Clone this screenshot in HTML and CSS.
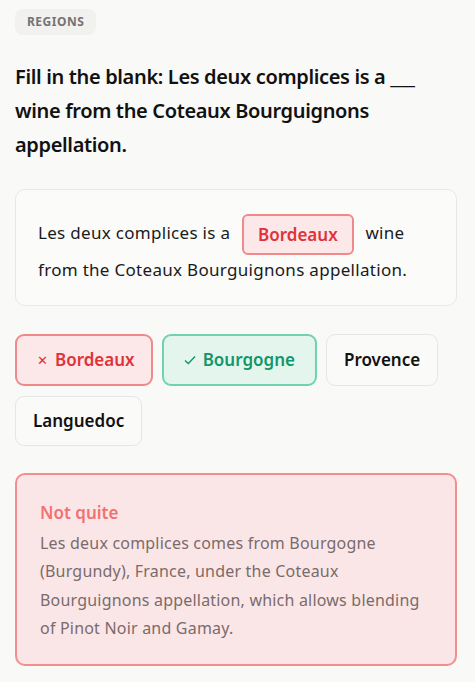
FILE: index.html
```html
<!DOCTYPE html>
<html lang="en">
<head>
<meta charset="utf-8">
<link rel="stylesheet" href="styles.css">
</head>
<body>
<main class="quiz">
  <div class="tag">Regions</div>
  <h1 class="question">Fill in the blank: Les deux complices is a ___ wine from the Coteaux Bourguignons appellation.</h1>
  <div class="sentence">
    <span>Les deux complices is a</span> <span class="blank">Bordeaux</span> <span>wine</span> <span>from the Coteaux Bourguignons appellation.</span>
  </div>
  <div class="options">
    <button class="opt wrong"><span class="mark">&#x2715;</span>Bordeaux</button>
    <button class="opt right"><svg class="check" viewBox="0 0 12 10" width="12" height="10"><path d="M1 5.5 L4.3 8.5 L11 1.5" fill="none" stroke="currentColor" stroke-width="1.4"/></svg>Bourgogne</button>
    <button class="opt">Provence</button>
    <button class="opt">Languedoc</button>
  </div>
  <div class="feedback">
    <div class="fb-title">Not quite</div>
    <p class="fb-text">Les deux complices comes from Bourgogne (Burgundy), France, under the Coteaux Bourguignons appellation, which allows blending of Pinot Noir and Gamay.</p>
  </div>
</main>
</body>
</html>
```
FILE: styles.css
```css
* { box-sizing: border-box; }
html, body { margin: 0; padding: 0; }
body {
  background: #f9f9f8;
  font-family: "Noto Sans", "Open Sans", sans-serif;
  color: #111;
}
.quiz {
  padding: 9px 18px 0 15px;
  display: flex;
  flex-direction: column;
  align-items: flex-start;
}
.tag {
  background: #f1f1f0;
  color: #737373;
  font-size: 12px;
  font-weight: 700;
  text-transform: uppercase;
  letter-spacing: 0.5px;
  padding: 5px 12px;
  border-radius: 8px;
  line-height: 16px;
}
.question {
  font-size: 20px;
  font-weight: 600;
  line-height: 34px;
  margin: 25px 0 0;
  letter-spacing: -0.35px;
}
.sentence {
  margin-top: 27px;
  width: 100%;
  background: #fbfbfa;
  border: 1px solid #e8e8e6;
  border-radius: 10px;
  padding: 25px 22px 17px;
  font-size: 17px;
  line-height: 36px;
  letter-spacing: 0.3px;
  color: #1a1a1a;
}
.blank {
  display: inline-block;
  vertical-align: middle;
  margin: -3px 7px;
  padding: 0 14px;
  line-height: 37px;
  background: #fce8e8;
  border: 2px solid #f08a8a;
  border-radius: 6px;
  color: #e0323a;
  font-weight: 600;
  letter-spacing: 0;
}
.options {
  margin-top: 28px;
  display: flex;
  flex-wrap: wrap;
  gap: 10px 9px;
}
.opt {
  font-family: inherit;
  font-size: 17px;
  font-weight: 600;
  color: #111;
  background: #fafaf9;
  border: 1px solid #e6e6e4;
  border-radius: 9px;
  height: 52px;
  padding: 0 17px;
  display: flex;
  align-items: center;
  gap: 7px;
}
.opt:last-child { height: 50px; }
.opt.wrong {
  background: #fce8e8;
  border: 2px solid #f08a8a;
  color: #e0323a;
  padding: 0 16px 0 20px;
}
.opt.right {
  background: #e3f5ec;
  border: 2px solid #6fd3ab;
  color: #14966a;
  padding: 0 20px 0 20px;
}
.mark { font-size: 13px; font-weight: 400; }
.check { display: block; }
.feedback {
  margin-top: 27px;
  width: 100%;
  background: #fbe6e7;
  border: 2px solid #f28e8e;
  border-radius: 10px;
  padding: 24px 30px 22px 23px;
}
.fb-title {
  color: #f07272;
  font-weight: 600;
  font-size: 17px;
  line-height: 28px;
}
.fb-text {
  margin: 2px 0 0;
  color: #7a6b6b;
  font-size: 16px;
  line-height: 28.3px;
  letter-spacing: 0.2px;
}
```
